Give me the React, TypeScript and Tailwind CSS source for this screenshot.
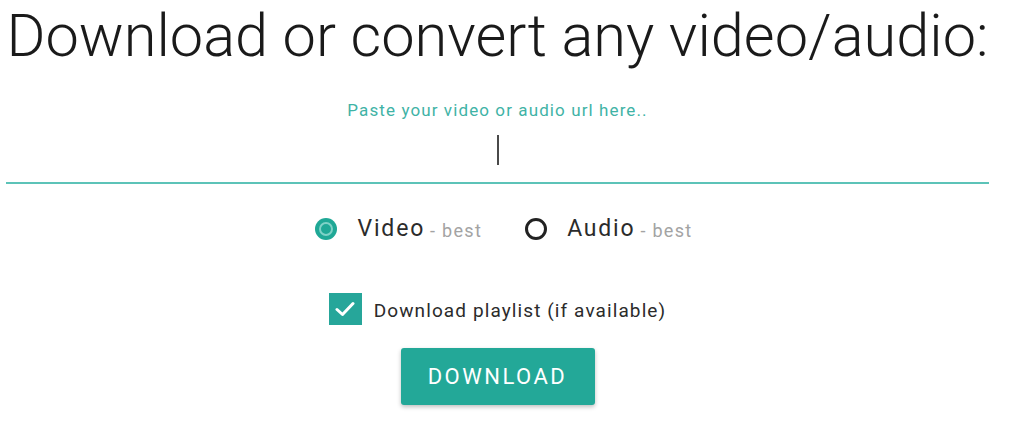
import { useState } from "react"

const App = () => {
    const [format, setFormat] = useState<"video" | "audio">("video")
    const [playlist, setPlaylist] = useState(true)

    return (
        <div className="w-[1024px] h-[431px] bg-white overflow-hidden font-['Roboto',sans-serif]">
            <div className="ml-[6px] w-[983px] flex flex-col items-center">
                <h1 className="mt-[2px] text-[59.5px] leading-[68px] font-light text-[#1a1a1a] whitespace-nowrap">
                    Download or convert any video/audio:
                </h1>

                <label htmlFor="url" className="mt-[30px] text-[17px] leading-[20px] tracking-[1.1px] text-[#3fb3a6]">
                    Paste your video or audio url here..
                </label>
                <div className="w-full mt-[12px] h-[52px] border-b-2 border-[#5cc3b8] flex justify-center">
                    <div className="mt-[3px] w-[2px] h-[30px] bg-[#4a4a4a]" />
                    <input id="url" className="hidden" />
                </div>

                <div className="mt-[28px] flex items-center pl-[12px]">
                    <button onClick={() => setFormat("video")} className="flex items-center">
                        <span className={`w-[22px] h-[22px] rounded-full flex items-center justify-center ${format === "video" ? "bg-[#1fa896]" : "border-[3px] border-[#222]"}`}>
                            {format === "video" && <span className="w-[14px] h-[14px] rounded-full border-2 border-[#7fd2c7] bg-[#1fa896]" />}
                        </span>
                        <span className="ml-[21px] text-[23px] tracking-[1.8px] text-[#2b2b2b]">Video</span>
                        <span className="ml-[5px] mt-[3px] text-[18px] tracking-[1.3px] text-[#a3a3a3]">- best</span>
                    </button>
                    <button onClick={() => setFormat("audio")} className="flex items-center ml-[43px]">
                        <span className={`w-[22px] h-[22px] rounded-full flex items-center justify-center ${format === "audio" ? "bg-[#1fa896]" : "border-[3px] border-[#222]"}`}>
                            {format === "audio" && <span className="w-[14px] h-[14px] rounded-full border-2 border-[#7fd2c7] bg-[#1fa896]" />}
                        </span>
                        <span className="ml-[20px] text-[23px] tracking-[1.8px] text-[#2b2b2b]">Audio</span>
                        <span className="ml-[5px] mt-[3px] text-[18px] tracking-[1.3px] text-[#a3a3a3]">- best</span>
                    </button>
                </div>

                <button onClick={() => setPlaylist(!playlist)} className="mt-[46px] flex items-center">
                    <span className={`w-[33px] h-[32px] flex items-center justify-center ${playlist ? "bg-[#26a69a]" : "border-2 border-[#5a5a5a]"}`}>
                        {playlist && (
                            <svg width="20" height="16" viewBox="0 0 20 16" fill="none">
                                <path d="M2 8.5 L7.5 13.5 L18 2.5" stroke="white" strokeWidth="3" strokeLinecap="round" strokeLinejoin="round" />
                            </svg>
                        )}
                    </span>
                    <span className="ml-[12px] mt-[4px] text-[19px] tracking-[1.1px] text-[#2b2b2b]">Download playlist (if available)</span>
                </button>

                <button className="mt-[23px] w-[194px] h-[57px] rounded-[3px] bg-[#23a898] text-white text-[22px] tracking-[2.5px] shadow-[0_2px_4px_rgba(0,0,0,0.25)]">
                    DOWNLOAD
                </button>
            </div>
        </div>
    )
}

export default App
